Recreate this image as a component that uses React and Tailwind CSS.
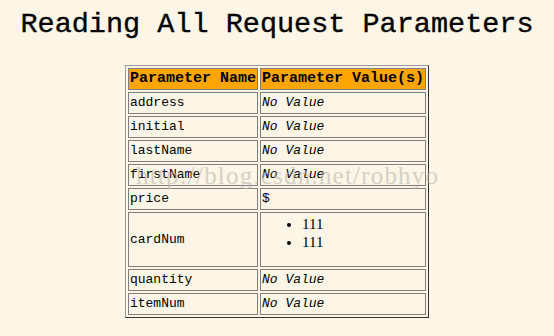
import React from "react";

const rows = [
  { name: "address" },
  { name: "initial" },
  { name: "lastName" },
  { name: "firstName" },
  { name: "price", value: "$" },
  { name: "cardNum", list: ["111", "111"] },
  { name: "quantity" },
  { name: "itemNum" },
];

const cell = "border border-[#808080] px-[1px] py-0 whitespace-nowrap";

export default function App() {
  return (
    <div className="w-[554px] h-[336px] bg-[#fdf5e6] text-black overflow-hidden relative">
      <h1 className="text-center font-['Liberation_Mono',monospace] text-[28.5px] leading-[34px] pt-[8px] [-webkit-text-stroke:0.35px_black]">
        Reading All Request Parameters
      </h1>
      <table className="mx-auto mt-[23px] border-separate border-spacing-[2px] border border-t-[#9a9a9a] border-l-[#9a9a9a] border-r-[#333] border-b-[#333] font-['Liberation_Mono',monospace] text-[13px]">
        <thead>
          <tr className="bg-[#ffa500] h-[22px]">
            <th className={`${cell} w-[130px] text-left font-bold text-[15px] leading-[18px]`}>Parameter Name</th>
            <th className={`${cell} w-[166px] text-left font-bold text-[15px] leading-[18px]`}>Parameter Value(s)</th>
          </tr>
        </thead>
        <tbody>
          {rows.map((r) => (
            <tr key={r.name} className="h-[22px]">
              <td className={cell}>{r.name}</td>
              <td className={cell}>
                {r.list ? (
                  <ul className="list-disc pl-[40px] mt-[2px] mb-[15px] font-['Liberation_Serif',serif] text-[15px] leading-[18px]">
                    {r.list.map((v, i) => (
                      <li key={i}>{v}</li>
                    ))}
                  </ul>
                ) : r.value ? (
                  r.value
                ) : (
                  <i>No Value</i>
                )}
              </td>
            </tr>
          ))}
        </tbody>
      </table>
      <div className="absolute left-[136px] top-[164px] font-['Liberation_Serif',serif] text-[25px] leading-[24px] text-[#b8b2aa] opacity-55 pointer-events-none tracking-[1.2px]">
        http://blog.csdn.net/robhyo
      </div>
    </div>
  );
}
